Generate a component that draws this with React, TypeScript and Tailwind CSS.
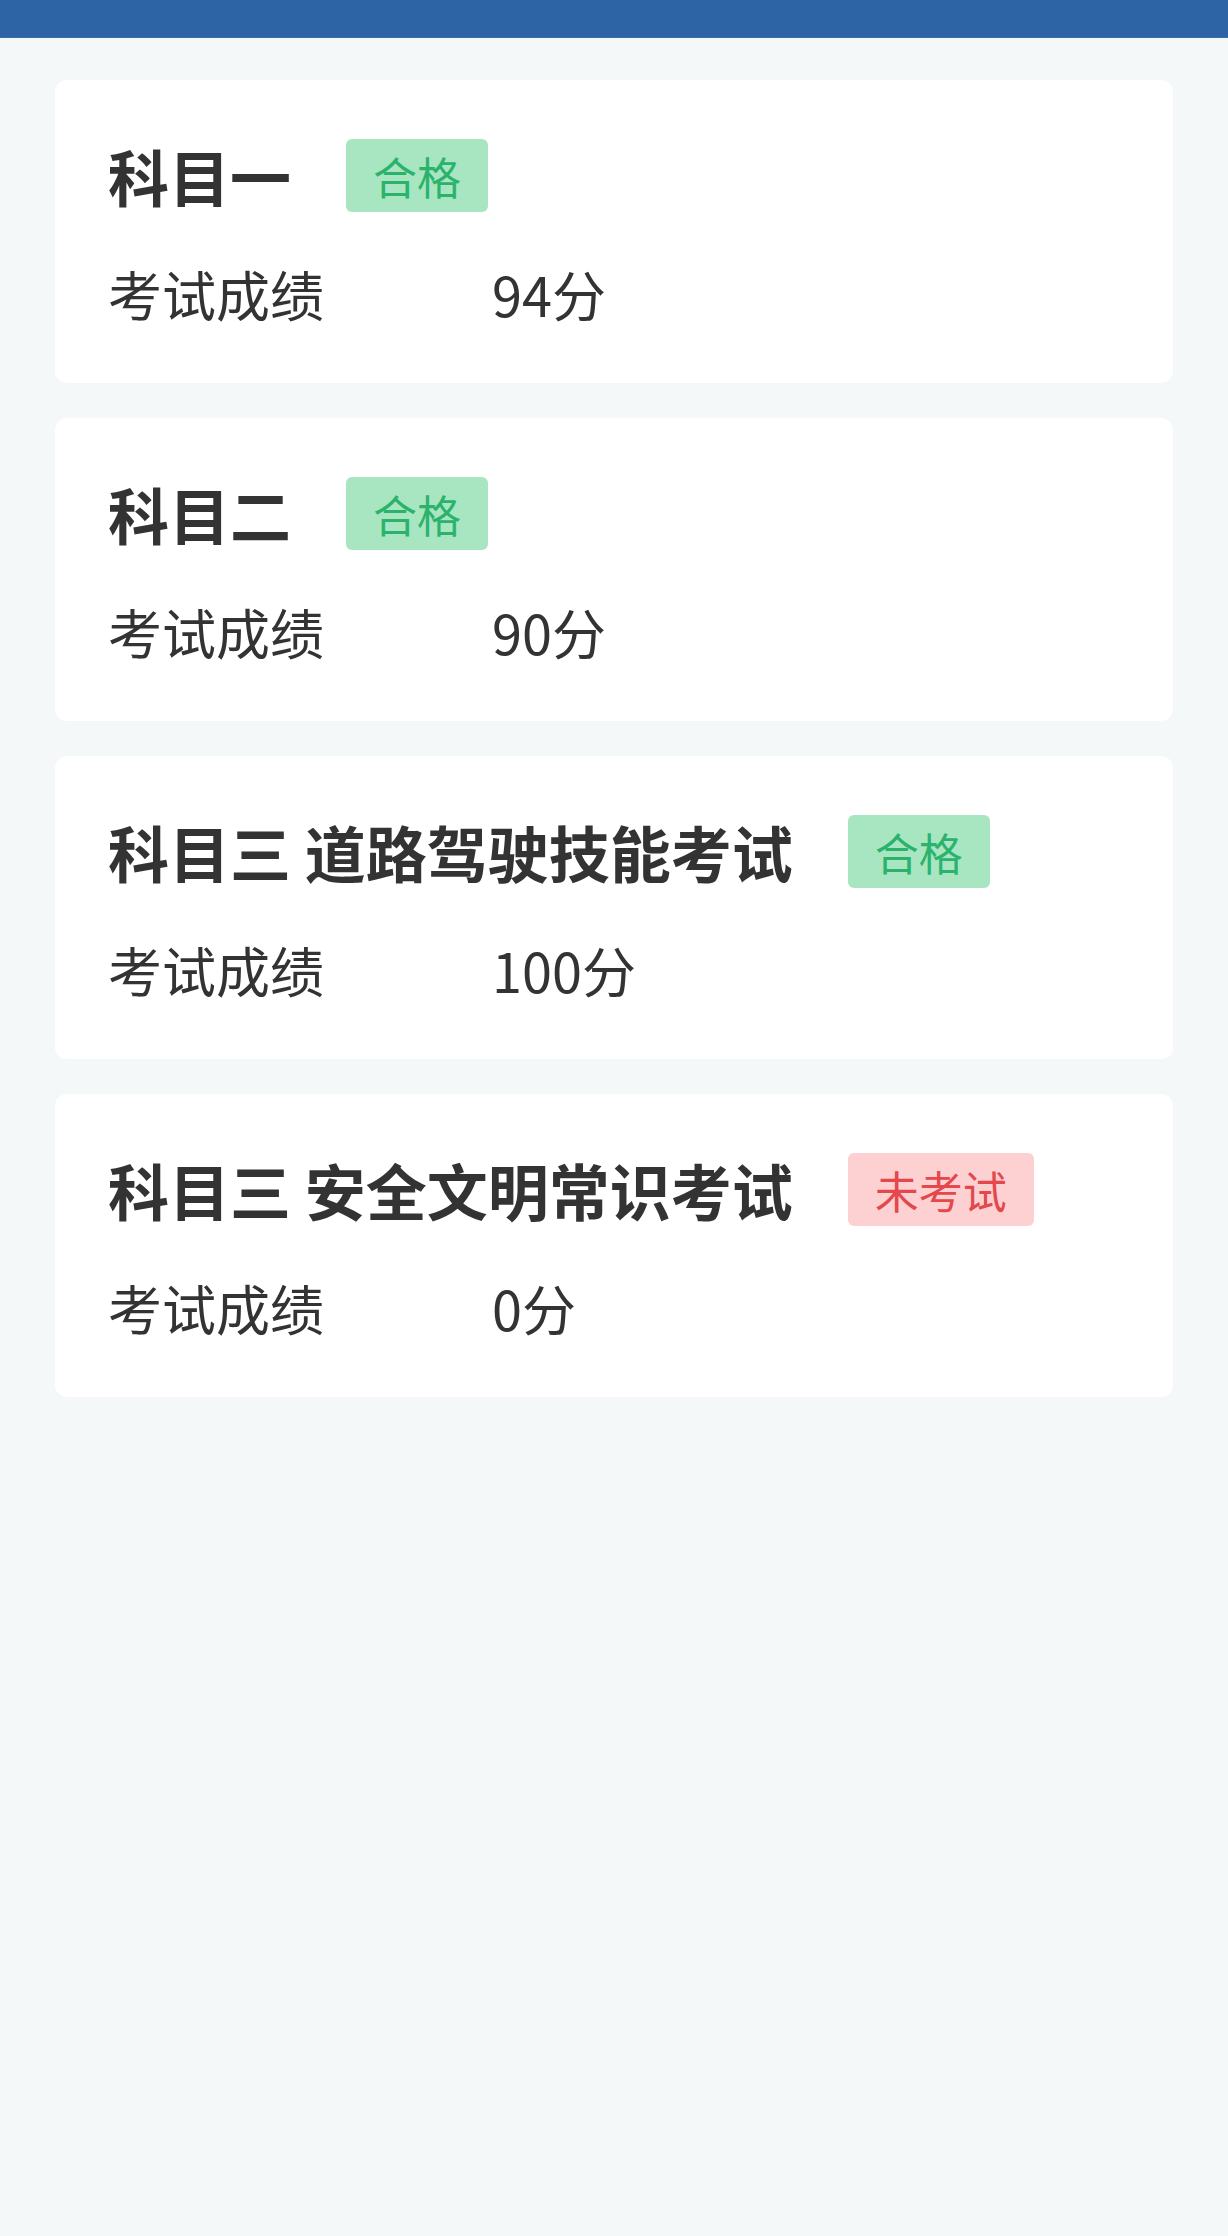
type Exam = {
  name: string;
  status: 'pass' | 'none';
  score: number;
};

const EXAMS: Exam[] = [
  { name: '科目一', status: 'pass', score: 94 },
  { name: '科目二', status: 'pass', score: 90 },
  { name: '科目三 道路驾驶技能考试', status: 'pass', score: 100 },
  { name: '科目三 安全文明常识考试', status: 'none', score: 0 },
];

function StatusTag({ status }: { status: Exam['status'] }) {
  if (status === 'pass') {
    return (
      <span className="h-[73px] px-[27px] flex items-center rounded-md bg-[#a8e6c1] text-[#2bb36e] text-[44px] leading-none">
        合格
      </span>
    );
  }
  return (
    <span className="h-[73px] px-[27px] flex items-center rounded-md bg-[#fdd1d1] text-[#e4484c] text-[44px] leading-none">
      未考试
    </span>
  );
}

function ExamCard({ exam }: { exam: Exam }) {
  return (
    <div className="h-[303px] bg-white rounded-xl pl-[53px] pt-[59px]">
      <div className="flex items-center h-[73px]">
        <h2 className="text-[61px] font-bold text-[#333333] leading-none">{exam.name}</h2>
        <div className="ml-[55px]">
          <StatusTag status={exam.status} />
        </div>
      </div>
      <div className="flex items-center mt-[44px] h-[76px] text-[54px] text-[#333333] leading-none">
        <span className="w-[384px]">考试成绩</span>
        <span>{exam.score}分</span>
      </div>
    </div>
  );
}

export default function App() {
  return (
    <div
      className="min-h-[2236px] bg-[#f4f8f9]"
      style={{ fontFamily: '"Noto Sans CJK SC", "Noto Sans", sans-serif' }}
    >
      <div className="h-[38px] bg-[#2c64a5] border-b border-[#3a6e9e]" />
      <main className="px-[55px] pt-[42px] flex flex-col gap-[35px]">
        {EXAMS.map((exam) => (
          <ExamCard key={exam.name} exam={exam} />
        ))}
      </main>
    </div>
  );
}
